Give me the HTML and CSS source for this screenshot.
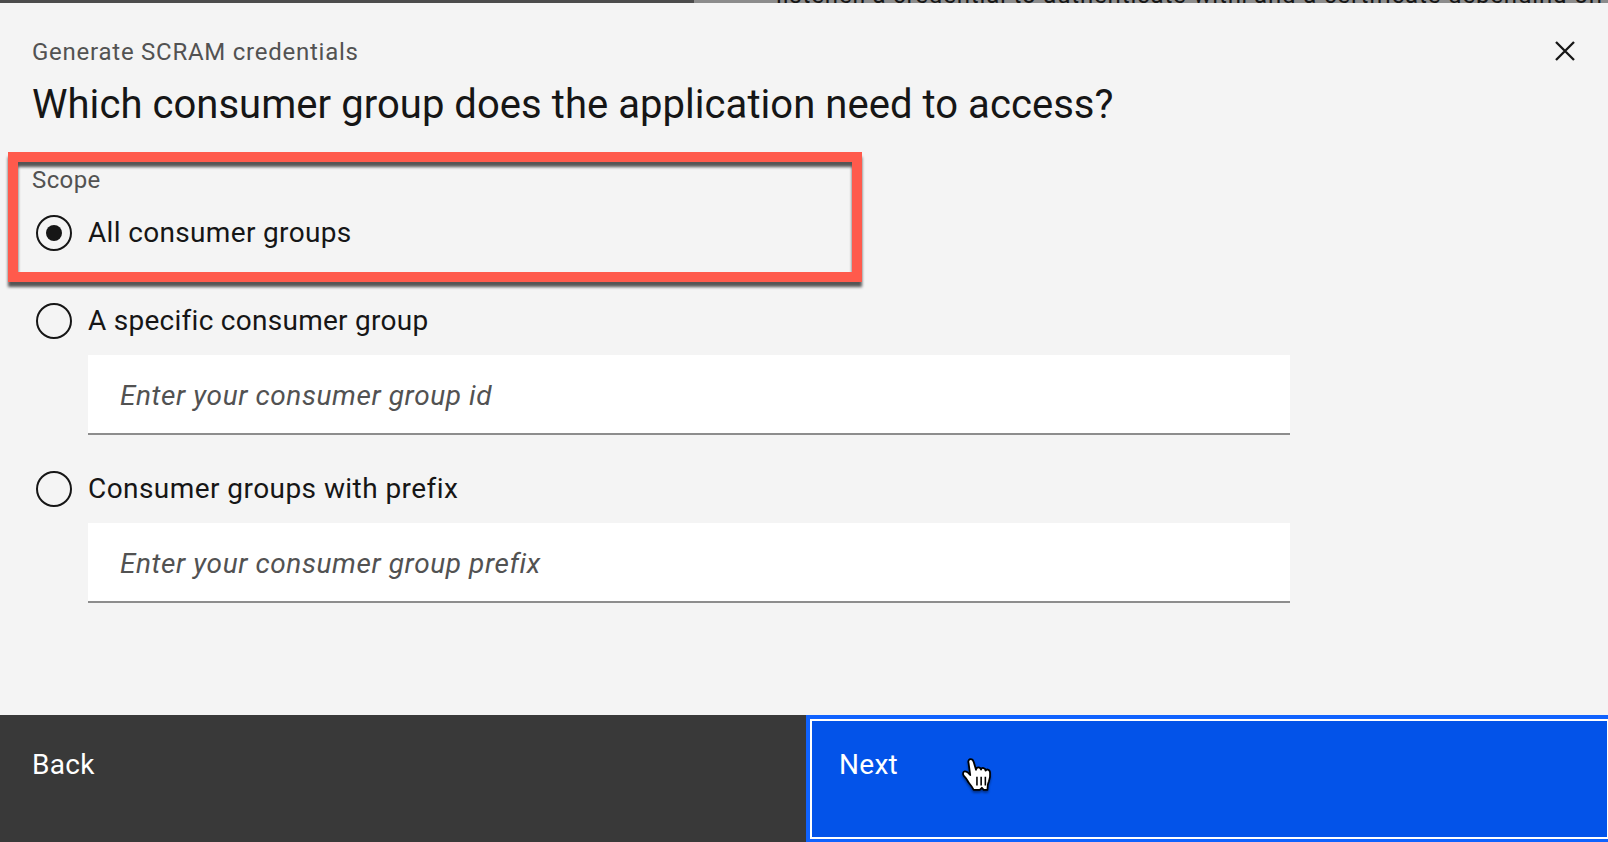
FILE: index.html
```html
<!DOCTYPE html>
<html lang="en">
<head>
<meta charset="utf-8">
<title>Generate SCRAM credentials</title>
<link rel="stylesheet" href="styles.css">
</head>
<body>
<div class="backdrop">
  <div class="backdrop-side"></div>
  <div class="backdrop-main"><p class="backdrop-text">listener, a credential to authenticate with, and a certificate depending on</p></div>
</div>
<main class="modal">
  <header class="header">
    <div>
      <p class="label">Generate SCRAM credentials</p>
      <h1 class="title">Which consumer group does the application need to access?</h1>
    </div>
    <button class="close" aria-label="Close">
      <svg width="20" height="20" viewBox="0 0 20 20"><path d="M1 1 19 19M19 1 1 19" fill="none" stroke="#161616" stroke-width="2.3"/></svg>
    </button>
  </header>
  <section class="content">
    <p class="scope">Scope</p>
    <div class="option option-all"><span class="radio radio-checked"></span><span class="option-text text-all">All consumer groups</span></div>
    <div class="option"><span class="radio"></span><span class="option-text text-specific">A specific consumer group</span></div>
    <div class="field">Enter your consumer group id</div>
    <div class="option option-prefix"><span class="radio"></span><span class="option-text text-prefix">Consumer groups with prefix</span></div>
    <div class="field">Enter your consumer group prefix</div>
    <div class="highlight"></div>
  </section>
  <footer class="footer">
    <button class="btn btn-back">Back</button>
    <button class="btn btn-next"><span class="btn-label">Next</span>
      <svg class="cursor" width="38" height="42" viewBox="0 0 36 40">
        <path d="M9 7.5C8.300 5.500 9.500 4 11 4c1.500 0 2.400 1 2.900 2.700l2.200 7.400c.1-1.600 1.100-2.400 2.300-2.400 1.300 0 2.200.8 2.500 2.200.3-1.100 1.200-1.700 2.300-1.500 1.200.2 1.900 1.100 2 2.500.4-.9 1.300-1.200 2.200-1 1.300.3 2 1.400 2.100 3 .3 3-.2 5.700-1.100 8.200-.8 2-1.300 3-1.200 5.100l-.2 3h-3.600l-1.700-2-2 2h-5.800c-1.300-2.600-2.700-4.400-4.300-6.300-1.500-1.800-2-3.700-3.400-5.200l-1.700-1.900c-1.300-1.500-.9-3.700.8-4.100 1.700-.3 3.300.9 5.300 3.400z" fill="#fff" stroke="#000" stroke-width="1.700" stroke-linejoin="round"/>
        <path d="M17 20.700v8.400M21 20.700v8.400M25 20.700v8.400" fill="none" stroke="#000" stroke-width="1.500"/>
      </svg>
    </button>
  </footer>
</main>
</body>
</html>
```
FILE: styles.css
```css
* { box-sizing: border-box; }
body {
  margin: 0;
  width: 1608px;
  height: 842px;
  overflow: hidden;
  background: #f4f4f4;
  color: #161616;
  font-family: Roboto, "Liberation Sans", sans-serif;
}
p, h1 { margin: 0; font-weight: 400; white-space: nowrap; }
button { border: 0; padding: 0; font: inherit; text-align: left; }

.backdrop { display: flex; height: 3px; overflow: hidden; }
.backdrop-side { width: 694px; background: #4c4c4c; }
.backdrop-main {
  flex: 1;
  display: flex;
  align-items: flex-end;
  padding-left: 82px;
  background: #8c8c8c;
}
.backdrop-text {
  font-size: 24px;
  line-height: 32px;
  letter-spacing: .84px;
  margin-bottom: -8px;
}

.modal { display: flex; flex-direction: column; height: 839px; }
.header {
  display: flex;
  justify-content: space-between;
  align-items: flex-start;
  padding: 33px 33px 0 32px;
}
.label { font-size: 24px; line-height: 32px; letter-spacing: .75px; color: #525252; }
.title { margin-top: 12px; font-size: 40px; line-height: 50px; letter-spacing: .05px; }
.close { display: flex; margin-top: 5px; background: none; }

.content { position: relative; flex: 1; padding: 34px 318px 0 33px; }
.scope { margin-left: -1px; font-size: 24px; line-height: 32px; letter-spacing: .4px; color: #525252; }
.option { display: flex; gap: 16px; height: 36px; margin-left: 3px; }
.option-all { margin: 19px 0 52px 3px; }
.option-prefix { margin-top: 36px; }
.radio {
  display: grid;
  place-items: center;
  width: 36px;
  height: 36px;
  border: 2px solid #161616;
  border-radius: 50%;
}
.radio-checked::after {
  content: "";
  width: 16px;
  height: 16px;
  border-radius: 50%;
  background: #161616;
}
.option-text { font-size: 28px; line-height: 36px; white-space: nowrap; }
.text-all { letter-spacing: .34px; }
.text-specific { letter-spacing: .27px; }
.text-prefix { letter-spacing: .44px; }
.field {
  height: 80px;
  margin: 16px 0 0 55px;
  padding: 2px 32px 0;
  border-bottom: 2px solid #8d8d8d;
  background: #fff;
  color: #525252;
  font-size: 28px;
  font-style: italic;
  line-height: 78px;
  letter-spacing: .59px;
}
.highlight {
  position: absolute;
  left: 8px;
  top: 22px;
  width: 854px;
  height: 130px;
  border: 10px solid #ff5a4c;
  filter: drop-shadow(0 5px 1.5px rgba(0, 0, 0, .65));
}

.footer { display: flex; height: 127px; overflow: hidden; }
.btn {
  flex: none;
  height: 128px;
  color: #fff;
  font-size: 28px;
  line-height: 36px;
}
.btn-back { display: flex; width: 806px; padding: 32px; background: #393939; letter-spacing: .3px; }
.btn-next {
  position: relative;
  display: flex;
  width: 807px;
  padding: 26px 29px;
  border: 4px solid #0f62fe;
  outline: 2px solid #fff;
  outline-offset: -6px;
  background: #0353e9;
  letter-spacing: .3px;
}
.btn-label { margin-top: 2px; }
.cursor {
  position: absolute;
  left: 149px;
  top: 36px;
  filter: drop-shadow(0 2px 1px rgba(0, 0, 0, .4));
}
```
